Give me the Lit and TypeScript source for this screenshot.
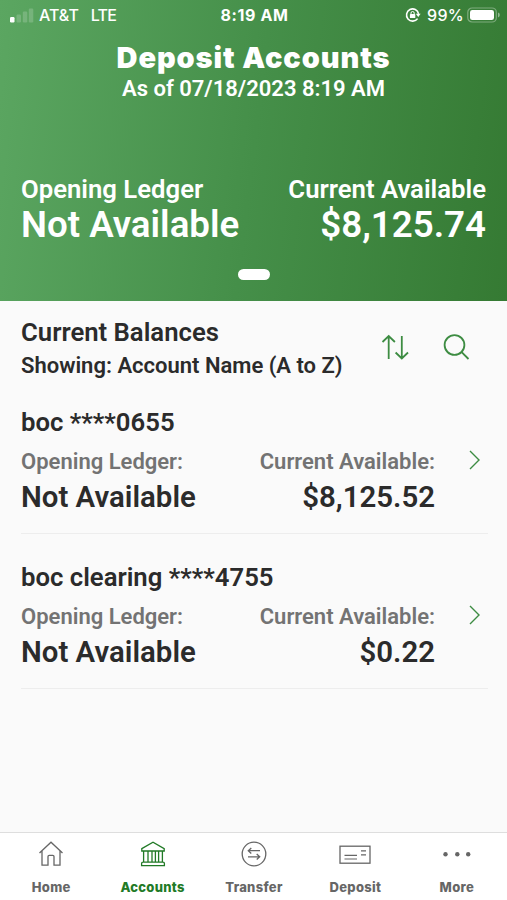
import { LitElement, html, css, svg } from "lit";
import { customElement, property } from "lit/decorators.js";
import { classMap } from "lit/directives/class-map.js";

interface Account {
  name: string;
  ledger: string;
  available: string;
}

const accounts: Account[] = [
  { name: "boc ****0655", ledger: "Not Available", available: "$8,125.52" },
  { name: "boc clearing ****4755", ledger: "Not Available", available: "$0.22" },
];

const tabs = [
  {
    label: "Home",
    icon: svg`<path d="M6.5 14 18 3.2 29.5 14M9 12V26.2H15V17.5Q15 16.3 16.2 16.3H19.8Q21 16.3 21 17.5V26.2H27V12"/>`,
  },
  {
    label: "Accounts",
    active: true,
    icon: svg`<path d="M6.8 9.6 18 3.2 29.2 9.6V12H6.8ZM8.6 12V23.2M13 12V23.2M17 12V23.2M20.4 12V23.2M23.6 12V23.2M27.4 12V23.2M8 23.2H28Q29.4 23.2 29.4 24.4V26.6H6.6V24.4Q6.6 23.2 8 23.2Z"/>`,
  },
  {
    label: "Transfer",
    icon: svg`<circle cx="18" cy="15" r="11.8"/><path d="M24 11.7H12.5M15.3 8.9 12.3 11.7 15.3 14.5M12 17.8H23.5M20.7 15 23.7 17.8 20.7 20.6"/>`,
  },
  {
    label: "Deposit",
    icon: svg`<rect x="3" y="7.2" width="30" height="17"/><path d="M7.5 16.4H20M7.5 20H20M24 11.8H29M24 15.8H29" stroke-width="1.2"/>`,
  },
  {
    label: "More",
    icon: svg`<g fill="currentColor" stroke="none"><circle cx="6.5" cy="15.3" r="2.2"/><circle cx="18.3" cy="15.3" r="2.2"/><circle cx="29.2" cy="15.3" r="2.2"/></g>`,
  },
];

@customElement("status-bar")
class StatusBar extends LitElement {
  static styles = css`
    :host {
      display: grid;
      grid-template-columns: 1fr auto 1fr;
      align-items: center;
      height: 30px;
      padding: 0 7px 0 9px;
      font: 500 16px/20px Inter, sans-serif;
    }
    .left, .right { display: flex; align-items: center; }
    .right { justify-content: flex-end; }
    .signal { width: 25px; height: 16px; margin-right: 5px; }
    .carrier { letter-spacing: 0; margin-right: 12px; }
    .network { letter-spacing: -0.8px; }
    .time { font-weight: 700; letter-spacing: 0.65px; }
    .lock { width: 16px; height: 16px; margin-right: 6px; }
    .percent { letter-spacing: 0.3px; }
    .battery { width: 33px; height: 16px; margin-left: 3px; }
  `;
  render() {
    return html`
      <div class="left">
        <svg class="signal" viewBox="0 0 25 16" fill="#fff">
          <rect x="1" y="10" width="4.5" height="5.5" rx="1.2" />
          <g opacity=".18">
            <rect x="7.5" y="7.5" width="4.5" height="8" rx="1.2" />
            <rect x="13.8" y="4.5" width="4.5" height="11" rx="1.2" />
            <rect x="19.8" y="1.5" width="4.5" height="14" rx="1.2" />
          </g>
        </svg>
        <span class="carrier">AT&amp;T</span><span class="network">LTE</span>
      </div>
      <span class="time">8:19 AM</span>
      <div class="right">
        <svg class="lock" viewBox="0 0 16 16" fill="none" stroke="#fff">
          <path d="M12.6 11.6A6.1 6.1 0 1 1 13.6 6.8" stroke-width="1.6" />
          <path d="M10.8 6.8H15.6L13.3 10Z" fill="#fff" stroke="none" />
          <rect x="4.9" y="7" width="5.4" height="4.1" rx=".7" fill="#fff" stroke="none" />
          <path d="M6 7V6.1a1.6 1.6 0 0 1 3.2 0V7" stroke-width="1" />
        </svg>
        <span class="percent">99%</span>
        <svg class="battery" viewBox="0 0 33 16">
          <rect x=".8" y="1" width="28.5" height="14" rx="4.3" fill="none" stroke="#fff" stroke-opacity=".35" stroke-width="1.2" />
          <rect x="3" y="3" width="24" height="10" rx="2.3" fill="#fff" />
          <path d="M31 5.6a2.5 2.5 0 0 1 0 4.8Z" fill="#fff" opacity=".45" />
        </svg>
      </div>
    `;
  }
}

@customElement("account-row")
class AccountRow extends LitElement {
  @property({ attribute: false }) account!: Account;
  static styles = css`
    :host {
      display: block;
      box-sizing: border-box;
      height: 155px;
      padding-top: 26px;
      border-bottom: 1.5px solid #ededed;
    }
    .name { font-size: 25.7px; line-height: 34px; color: #2b2b2b; }
    .body { display: grid; grid-template-columns: 1fr auto 53px; margin-top: 7px; }
    .label { font-size: 22px; line-height: 32px; color: #737373; }
    .value { font-size: 29.4px; line-height: 38px; color: #2b2b2b; }
    .end { text-align: right; }
    .chevron { width: 14px; height: 22px; justify-self: end; margin: 3px 6px 0 0; }
  `;
  render() {
    const { name, ledger, available } = this.account;
    return html`
      <div class="name">${name}</div>
      <div class="body">
        <div>
          <div class="label">Opening Ledger:</div>
          <div class="value">${ledger}</div>
        </div>
        <div class="end">
          <div class="label">Current Available:</div>
          <div class="value">${available}</div>
        </div>
        <svg class="chevron" viewBox="0 0 14 22" fill="none" stroke="#3d8c42" stroke-width="1.4">
          <path d="M2 2 11 11 2 20" />
        </svg>
      </div>
    `;
  }
}

@customElement("app-root")
class AppRoot extends LitElement {
  static styles = css`
    :host {
      display: flex;
      flex-direction: column;
      width: 507px;
      height: 900px;
      overflow: hidden;
      background: #fafafa;
      font-family: Roboto, sans-serif;
      font-weight: 600;
      color: #2b2b2b;
      white-space: nowrap;
    }
    header {
      height: 301px;
      box-sizing: border-box;
      color: #fff;
      background: linear-gradient(97deg, #5ba661 0%, #458f49 50%, #357a33 100%);
    }
    h1 { margin: 10px 0 0; font: 900 29px/36px Inter, sans-serif; text-align: center; letter-spacing: 0.9px; }
    .date { font-size: 22px; line-height: 25px; text-align: center; }
    .totals { display: flex; justify-content: space-between; padding: 0 21px; margin-top: 74px; }
    .end { text-align: right; }
    .total-label { font-size: 25.7px; line-height: 29px; }
    .total-value { font-size: 36.7px; line-height: 41px; }
    .handle { width: 32px; height: 11px; border-radius: 6px; background: #fff; margin: 24px auto 0; }
    main { flex: 1; padding: 0 19px 0 21px; }
    .toolbar { display: flex; justify-content: space-between; height: 78px; padding-top: 15px; box-sizing: border-box; }
    .heading { font-size: 25.7px; line-height: 33px; }
    .sort { font-size: 22px; line-height: 33px; }
    .actions { display: flex; gap: 31px; padding: 16px 17px 0 0; }
    .actions svg { width: 30px; height: 30px; fill: none; stroke: #3d8c42; stroke-width: 1.8; }
    nav {
      display: grid;
      grid-template-columns: repeat(5, 1fr);
      height: 68px;
      box-sizing: border-box;
      border-top: 1.5px solid #dedede;
      background: #fff;
    }
    .tab { display: flex; flex-direction: column; align-items: center; padding: 6px 0 0 1px; color: #666; }
    .tab.active { color: #217a26; }
    .tab svg { width: 36px; height: 30px; fill: none; stroke: currentColor; stroke-width: 1.3; }
    .tab span { margin-top: 9px; font: 800 13px/18px Inter, sans-serif; letter-spacing: 0.3px; }
  `;
  render() {
    return html`
      <header>
        <status-bar></status-bar>
        <h1>Deposit Accounts</h1>
        <div class="date">As of 07/18/2023 8:19 AM</div>
        <div class="totals">
          <div>
            <div class="total-label">Opening Ledger</div>
            <div class="total-value">Not Available</div>
          </div>
          <div class="end">
            <div class="total-label">Current Available</div>
            <div class="total-value">$8,125.74</div>
          </div>
        </div>
        <div class="handle"></div>
      </header>
      <main>
        <div class="toolbar">
          <div>
            <div class="heading">Current Balances</div>
            <div class="sort">Showing: Account Name (A to Z)</div>
          </div>
          <div class="actions">
            <svg viewBox="0 0 30 30"><path d="M8.7 27V4M2.5 10 8.7 4 14.9 10M21.8 4V26.5M15.6 20.5 21.8 26.5 28 20.5" /></svg>
            <svg viewBox="0 0 30 30"><circle cx="13.5" cy="13" r="9.9" /><path d="M20.4 19.8 27.5 27" /></svg>
          </div>
        </div>
        ${accounts.map((account) => html`<account-row .account=${account}></account-row>`)}
      </main>
      <nav>
        ${tabs.map(
          (tab) => html`
            <div class=${classMap({ tab: true, active: !!tab.active })}>
              <svg viewBox="0 0 36 30">${tab.icon}</svg>
              <span>${tab.label}</span>
            </div>
          `
        )}
      </nav>
    `;
  }
}
